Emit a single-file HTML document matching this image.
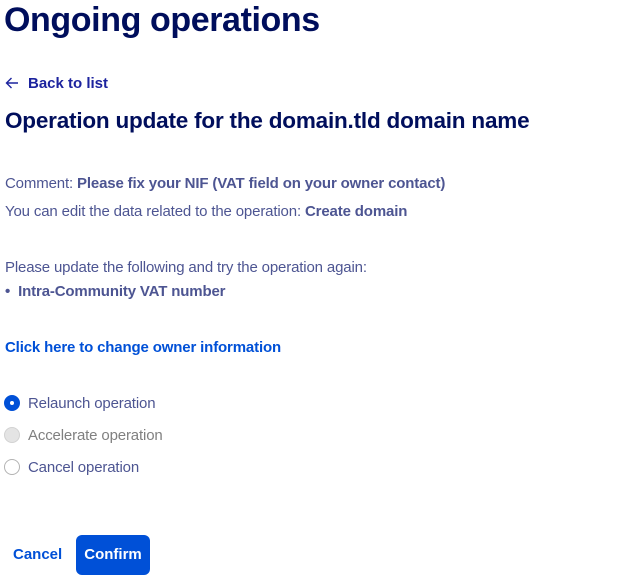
<!DOCTYPE html>
<html><head><meta charset="utf-8"><style>
*{margin:0;padding:0;box-sizing:border-box}
body{width:630px;height:584px;background:#fff;font-family:"Liberation Sans",sans-serif;color:#4d5592;position:relative;overflow:hidden}
.a{position:absolute;white-space:nowrap;line-height:1}
h1{position:absolute;left:4px;top:3px;font-size:34px;font-weight:bold;color:#000e5c;letter-spacing:-0.4px;line-height:1}
h2{position:absolute;left:5px;top:110px;font-size:22.5px;font-weight:bold;color:#000e5c;letter-spacing:-0.2px;line-height:1}
.t{font-size:15px;letter-spacing:-0.15px}
b{font-weight:bold}
.r{position:absolute;left:4px;width:16px;height:16px;border-radius:50%;border:1px solid #b3b3b3;background:#fff}
</style></head><body>
<h1>Ongoing operations</h1>
<div class="a" style="left:5px;top:76px;font-size:15px;font-weight:bold;color:#1c239e;">
<svg width="14" height="12" viewBox="0 0 14 12" style="vertical-align:-1px;margin-right:9px"><path d="M13 6H1.5M6.5 1L1.5 6l5 5" stroke="#1c239e" stroke-width="1.4" fill="none"/></svg>Back to list</div>
<h2>Operation update for the domain.tld domain name</h2>
<div class="a t" style="left:5px;top:176px">Comment: <b>Please fix your NIF (VAT field on your owner contact)</b></div>
<div class="a t" style="left:5px;top:204px">You can edit the data related to the operation: <b>Create domain</b></div>
<div class="a t" style="left:5px;top:260px">Please update the following and try the operation again:</div>
<div class="a t" style="left:5px;top:284px"><b>•&nbsp; Intra-Community VAT number</b></div>
<div class="a t" style="left:5px;top:340px;color:#0050d7;font-weight:bold">Click here to change owner information</div>
<div class="r" style="top:395px;background:#0050d7;border-color:#0050d7"><div style="position:absolute;left:5px;top:5px;width:4px;height:4px;border-radius:50%;background:#fff"></div></div>
<div class="a t" style="left:28px;top:396px">Relaunch operation</div>
<div class="r" style="top:427px;background:#e4e4e4;border-color:#d2d2d2"></div>
<div class="a t" style="left:28px;top:428px;color:#808080">Accelerate operation</div>
<div class="r" style="top:459px"></div>
<div class="a t" style="left:28px;top:460px">Cancel operation</div>
<div class="a" style="left:13px;top:547px;font-size:15px;font-weight:bold;color:#0050d7">Cancel</div>
<div style="position:absolute;left:76px;top:535px;width:74px;height:40px;border-radius:6px;background:#0050d7;color:#fff;font-size:15px;font-weight:bold;text-align:center;line-height:40px">Confirm</div>
</body></html>
